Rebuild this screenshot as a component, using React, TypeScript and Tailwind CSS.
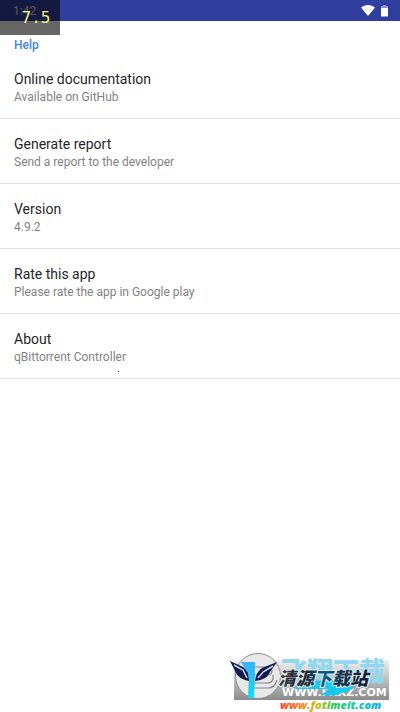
const items = [
  { title: "Online documentation", detail: "Available on GitHub" },
  { title: "Generate report", detail: "Send a report to the developer" },
  { title: "Version", detail: "4.9.2" },
  { title: "Rate this app", detail: "Please rate the app in Google play" },
  { title: "About", detail: "qBittorrent Controller" },
];

function StatusBar() {
  return (
    <header className="relative flex h-[21px] items-center justify-between bg-[#303f9f] pr-3 pl-[13px] text-white">
      <time className="text-xs leading-4 opacity-80">1:42</time>
      <div className="flex items-center gap-1.5">
        <svg width="14" height="11" viewBox="0 0 14 11" aria-label="Wi-Fi">
          <path d="M0 2.6C4-.8 10-.8 14 2.6L7 11z" fill="#fff" />
        </svg>
        <svg width="7" height="12" viewBox="0 0 7 12" aria-label="Battery">
          <path d="M2 0h3v1h2v3H0V1h2z" fill="#8f98cd" />
          <path d="M0 3h7v8.5H0z" fill="#fff" />
        </svg>
      </div>
      <div className="absolute top-0 left-0 flex h-[35px] w-[60px] items-center justify-center bg-black/60 pl-3 font-['DejaVu_Sans_Mono',monospace] text-base text-[#f4f07a]">
        7.5
      </div>
    </header>
  );
}

function Watermark() {
  return (
    <svg
      className="pointer-events-none absolute right-0 bottom-0"
      width="180"
      height="72"
      viewBox="0 0 180 72"
      aria-label="www.fotimeit.com"
    >
      <defs>
        <linearGradient id="plate" x1="0" y1="0" x2="0" y2="1">
          <stop offset="0" stopColor="#f0f0f0" />
          <stop offset="1" stopColor="#8b8b8b" />
        </linearGradient>
        <linearGradient id="rainbow" x1="0" y1="0" x2="1" y2="0">
          <stop offset="0" stopColor="#f0442c" />
          <stop offset="0.22" stopColor="#f58a1c" />
          <stop offset="0.38" stopColor="#c8c21c" />
          <stop offset="0.52" stopColor="#35c552" />
          <stop offset="0.75" stopColor="#12c9b4" />
          <stop offset="1" stopColor="#16a9ee" />
        </linearGradient>
        <linearGradient id="stem" x1="0" y1="0" x2="0" y2="1">
          <stop offset="0" stopColor="#36b4f5" />
          <stop offset="1" stopColor="#12dcf7" />
        </linearGradient>
        <linearGradient id="letters" x1="0" y1="0" x2="1" y2="0">
          <stop offset="0" stopColor="#38393d" />
          <stop offset="0.3" stopColor="#1c2735" />
          <stop offset="0.5" stopColor="#0a5f88" />
          <stop offset="0.7" stopColor="#17304b" />
          <stop offset="1" stopColor="#111c35" />
        </linearGradient>
      </defs>
      <path d="M14 20h155v40H14z" fill="url(#plate)" />
      <circle cx="38" cy="36" r="22.5" fill="#e8e8e8" stroke="#8c8c8c" />
      <path d="M35 27h11q6 0 6 4t-6 4H35M53 35v4q-1 4-6 4H35l-4 5h17q7 0 9-8" fill="none" stroke="#858585" strokeWidth="1.2" />
      <text x="61" y="41" fontSize="26" fontWeight="900" fill="#8fd8f0" fontFamily="'Noto Sans CJK SC', sans-serif">飞翔下载</text>
      <text x="62" y="56" fontSize="11" fontWeight="700" fill="#fff" stroke="#999" strokeWidth="1" paintOrder="stroke" fontFamily="'DejaVu Sans', sans-serif">WWW.FXXZ.COM</text>
      <path d="M75 49l4-8 56-1-2 9-16 6q-7 1-16 0l8-6z" fill="#18c9ee" />
      <text x="58" y="45" fontSize="18" fontWeight="900" fill="url(#letters)" stroke="#e1eef2" strokeWidth="2" paintOrder="stroke" fontStyle="italic" fontFamily="'Noto Sans CJK SC', sans-serif">清源下载站</text>
      <path d="M21 22h14v13l-1 22q-5 3-6 0l1-21z" fill="url(#stem)" />
      <path d="M10 21l13 6q6 4 6 14-11-2-14-10z" fill="#15184b" />
      <path d="M14 25l9 5 4 8" fill="none" stroke="#b5dce8" strokeWidth="1.5" />
      <path d="M57 22l-15 6q-6 4-7 13 12-1 15-9z" fill="#15184b" />
      <path d="M53 26l-10 6-5 6" fill="none" stroke="#b5dce8" strokeWidth="1.5" />
      <text x="60" y="69" fontSize="11" fontWeight="800" fontStyle="italic" fill="url(#rainbow)" fontFamily="'Open Sans', sans-serif">www.fotimeit.com</text>
    </svg>
  );
}

export default function App() {
  return (
    <div className="relative min-h-screen bg-white font-[Roboto,sans-serif]">
      <StatusBar />
      <main>
        <h1 className="px-3.5 pt-4 text-xs leading-4 font-medium text-[#4285e8]">Help</h1>
        <ul className="pt-px">
          {items.map((item) => (
            <li key={item.title} className="border-b border-[#e2e2e2]">
              <button type="button" className="block w-full px-3.5 pt-4 pb-3 text-left">
                <span className="block text-sm leading-[18px] text-[#262626]">{item.title}</span>
                <span className="block text-xs leading-[18px] text-[#828282]">{item.detail}</span>
              </button>
            </li>
          ))}
        </ul>
      </main>
      <span className="absolute top-[371px] left-[118px] size-px bg-black" />
      <Watermark />
    </div>
  );
}
